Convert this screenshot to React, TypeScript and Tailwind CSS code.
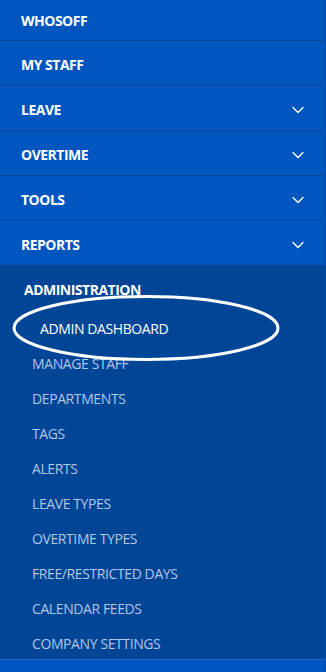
import { ChevronDown } from "lucide-react";

const topItems = [
    { label: "WHOSOFF", sub: false },
    { label: "MY STAFF", sub: false },
    { label: "LEAVE", sub: true },
    { label: "OVERTIME", sub: true },
    { label: "TOOLS", sub: true },
    { label: "REPORTS", sub: true },
];

const adminLinks = [
    "MANAGE STAFF",
    "DEPARTMENTS",
    "TAGS",
    "ALERTS",
    "LEAVE TYPES",
    "OVERTIME TYPES",
    "FREE/RESTRICTED DAYS",
    "CALENDAR FEEDS",
    "COMPANY SETTINGS",
];

export default function App() {
    return (
        <div
            className="w-[326px] h-[672px] overflow-hidden bg-[#0056be] border-r border-[#0049a6]"
            style={{ fontFamily: '"Open Sans", "Noto Sans", sans-serif' }}
        >
            {/* Top level menu */}
            {topItems.map((item, i) => (
                <div
                    key={item.label}
                    className={`flex items-center justify-between pl-[21px] pr-[17px] border-b border-[#00459c] ${i === 0 ? "h-[41px] pt-[1px]" : "h-[45px] pt-[3px]"}`}
                >
                    <span className="text-[14px] font-bold tracking-[-0.5px] text-white">
                        {item.label}
                    </span>
                    {item.sub && <ChevronDown size={20} strokeWidth={1.6} className="text-white" />}
                </div>
            ))}

            {/* Administration submenu */}
            <div className="bg-[#004596] pt-[14px] pb-[6px]">
                <div className="pl-[24px] text-[14px] font-bold tracking-[-0.5px] text-white leading-[19px]">
                    ADMINISTRATION
                </div>

                <div className="relative mt-[20px] mb-[16px] pl-[40px] text-[14px] tracking-[-0.4px] text-white leading-[19px]">
                    ADMIN DASHBOARD
                    {/* highlight ring */}
                    <svg
                        className="absolute left-[12px] top-[-25px] pointer-events-none"
                        width="270"
                        height="68"
                        viewBox="0 0 270 68"
                    >
                        <ellipse cx="134" cy="34" rx="132" ry="31.5" fill="none" stroke="white" strokeWidth="3" />
                    </svg>
                </div>

                <div className="flex flex-col gap-[16px]">
                    {adminLinks.map((link) => (
                        <div
                            key={link}
                            className="pl-[32px] text-[14px] tracking-[-0.4px] text-[#b3c6e6] leading-[19px]"
                        >
                            {link}
                        </div>
                    ))}
                </div>
            </div>

            {/* Next section (cut off) */}
            <div className="h-[20px] bg-[#0056c0] border-t border-[#1a66c8]" />
        </div>
    );
}
